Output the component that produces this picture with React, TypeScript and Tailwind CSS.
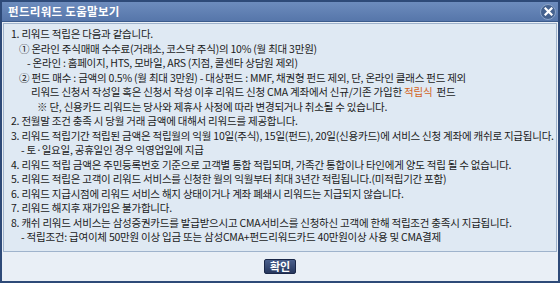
import React from "react";

const FONT = { fontFamily: '"Noto Sans CJK KR", "Noto Sans", sans-serif' };

type Line = { indent: string; text: React.ReactNode };

const LINES: Line[] = [
	{ indent: "pl-[7px]", text: "1. 리워드 적립은 다음과 같습니다." },
	{ indent: "pl-[15px]", text: "① 온라인 주식매매 수수료(거래소, 코스닥 주식)의 10% (월 최대 3만원)" },
	{ indent: "pl-[23px]", text: "- 온라인 : 홈페이지, HTS, 모바일, ARS (지점, 콜센타 상담원 제외)" },
	{ indent: "pl-[15px]", text: "② 펀드 매수 : 금액의 0.5% (월 최대 3만원) - 대상펀드 : MMF, 채권형 펀드 제외, 단, 온라인 클래스 펀드 제외" },
	{
		indent: "pl-[27px]",
		text: (
			<>
				리워드 신청서 작성일 혹은 신청서 작성 이후 리워드 신청 CMA 계좌에서 신규/기존 가입한{" "}
				<span className="text-[#d2641c]">적립식</span>&nbsp; 펀드
			</>
		),
	},
	{ indent: "pl-[33px]", text: "※ 단, 신용카드 리워드는 당사와 제휴사 사정에 따라 변경되거나 취소될 수 있습니다." },
	{ indent: "pl-[7px]", text: "2. 전월말 조건 충족 시 당월 거래 금액에 대해서 리워드를 제공합니다." },
	{ indent: "pl-[7px]", text: "3. 리워드 적립기간 적립된 금액은 적립월의 익월 10일(주식), 15일(펀드), 20일(신용카드)에 서비스 신청 계좌에 캐쉬로 지급됩니다." },
	{ indent: "pl-[17px]", text: "- 토·일요일, 공휴일인 경우 익영업일에 지급" },
	{ indent: "pl-[7px]", text: "4. 리워드 적립 금액은 주민등록번호 기준으로 고객별 통합 적립되며, 가족간 통합이나 타인에게 양도 적립 될 수 없습니다." },
	{ indent: "pl-[7px]", text: "5. 리워드 적립은 고객이 리워드 서비스를 신청한 월의 익월부터 최대 3년간 적립됩니다.(미적립기간 포함)" },
	{ indent: "pl-[7px]", text: "6. 리워드 지급시점에 리워드 서비스 해지 상태이거나 계좌 폐쇄시 리워드는 지급되지 않습니다." },
	{ indent: "pl-[7px]", text: "7. 리워드 해지후 재가입은 불가합니다." },
	{ indent: "pl-[7px]", text: "8. 캐쉬 리워드 서비스는 삼성증권카드를 발급받으시고 CMA서비스를 신청하신 고객에 한해 적립조건 충족시 지급됩니다." },
	{ indent: "pl-[17px]", text: "- 적립조건: 급여이체 50만원 이상 입금 또는 삼성CMA+펀드리워드카드 40만원이상 사용 및 CMA결제" },
];

export default function App() {
	return (
		<div
			className="w-[560px] h-[283px] flex flex-col bg-[#2e4a78] p-[2px] text-[#1b1b1b]"
			style={FONT}
		>
			{/* Title bar */}
			<div className="h-[19px] flex items-center justify-between bg-gradient-to-b from-[#6d8cbd] to-[#5676aa] pl-[6px] pr-[2px]">
				<span className="text-white text-[11.5px] font-bold tracking-[0.3px]">펀드리워드 도움말보기</span>
				<div className="w-[16px] h-[16px] rounded-full bg-[#45628f] border border-[#8aa3c7] flex items-center justify-center">
					<svg width="9" height="9" viewBox="0 0 9 9">
						<path d="M1.5 1.5 L7.5 7.5 M7.5 1.5 L1.5 7.5" stroke="#fff" strokeWidth="2.2" strokeLinecap="square" />
					</svg>
				</div>
			</div>

			{/* Body */}
			<div className="flex-1 flex flex-col bg-[#e9eff6] border-t border-[#3b5b8c]">
				<div className="mx-[1px] mt-[1px] h-[229px] bg-[#dfe9f3] border border-[#9fb3cc] flex flex-col pt-[3px]">
					{LINES.map((l, i) => (
						<div
							key={i}
							className={`h-[14.5px] leading-[14.5px] text-[10.5px] tracking-[-0.23px] whitespace-nowrap ${l.indent}`}
						>
							{l.text}
						</div>
					))}
				</div>
				<div className="flex-1 flex items-center justify-center">
					<button className="h-[15px] px-[5px] bg-gradient-to-b from-[#4a5f8c] to-[#26375e] border border-[#1a2748] text-white text-[11px] leading-[13px] font-bold rounded-[2px]">
						확인
					</button>
				</div>
			</div>
		</div>
	);
}
